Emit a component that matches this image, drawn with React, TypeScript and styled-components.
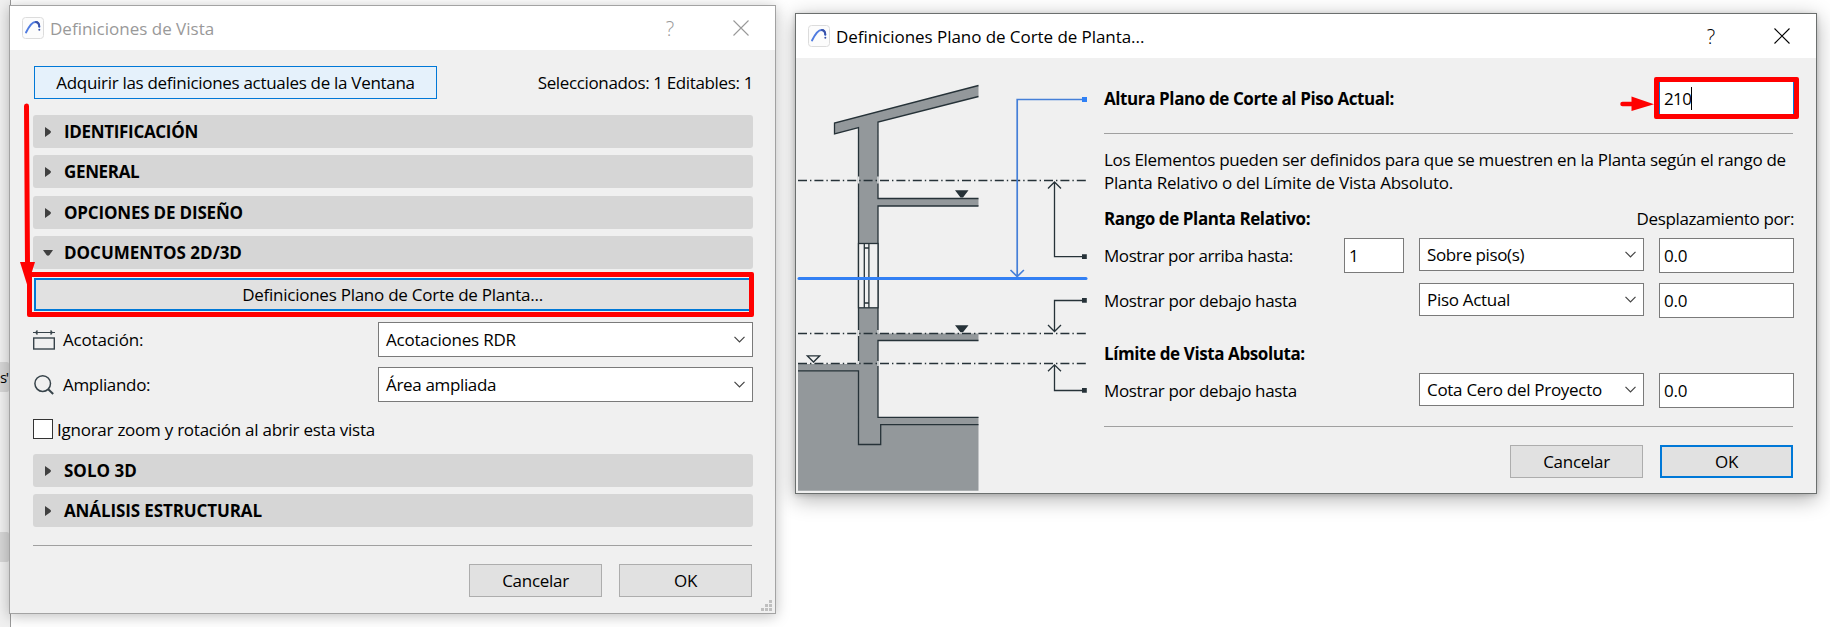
import React from "react";
import styled, { createGlobalStyle, css } from "styled-components";

const GlobalStyle = createGlobalStyle`
  * { box-sizing: border-box; }
  body { margin: 0; background: #fff; overflow: hidden; }
  button, input { font: inherit; color: inherit; margin: 0; }
`;

const Desktop = styled.div`
  position: relative;
  width: 1830px;
  height: 627px;
  overflow: hidden;
  background: #fff;
  font-family: "Open Sans", "Noto Sans", sans-serif;
  font-size: 17px;
  line-height: 23px;
  color: #000;
`;

const Backdrop = styled.div`
  width: 11px;
  height: 627px;
  padding-top: 362px;
  background: #f0f0f0;
  border-right: 1px solid #9a9a9a;
  display: flex;
  flex-direction: column;
  gap: 140px;
`;

const BackdropTab = styled.div`
  width: 9px;
  height: 30px;
  background: #d6d6d6;
  border-radius: 0 2px 2px 0;
  white-space: nowrap;
  line-height: 30px;
  font-size: 15px;
  letter-spacing: -1.5px;
`;

const Dialog = styled.section<{ $x: number; $y: number; $w: number; $h: number; $active?: boolean }>`
  position: absolute;
  left: ${(p) => p.$x}px;
  top: ${(p) => p.$y}px;
  width: ${(p) => p.$w}px;
  height: ${(p) => p.$h}px;
  display: flex;
  flex-direction: column;
  background: #f0f0f0;
  border: 1px solid ${(p) => (p.$active ? "#6b6f6e" : "#a3a3a3")};
  box-shadow: ${(p) =>
    p.$active ? "0 5px 20px rgba(0,0,0,.32), 0 1px 5px rgba(0,0,0,.18)" : "0 2px 13px rgba(0,0,0,.26)"};
`;

const TitleBar = styled.header<{ $active?: boolean }>`
  height: 44px;
  flex: none;
  display: flex;
  align-items: center;
  background: #fff;
  padding: 0 26px 0 12px;
  color: ${(p) => (p.$active ? "#000" : "#999")};

  svg { flex: none; }
`;

const TitleText = styled.h1<{ $track?: number }>`
  flex: 1;
  margin: 1px 0 0 6px;
  font-size: 17px;
  font-weight: 400;
  letter-spacing: ${(p) => p.$track ?? 0}px;
`;

const HelpMark = styled.span`
  width: 20px;
  margin-right: 53px;
  text-align: center;
  font-size: 20px;
  font-weight: 300;
`;

const Label = styled.span<{ $track?: number; $bold?: boolean }>`
  white-space: nowrap;
  letter-spacing: ${(p) => p.$track ?? -0.28}px;
  font-weight: ${(p) => (p.$bold ? 700 : 400)};
`;

const PushButton = styled.button<{ $w?: number; $look?: "hot" | "default" }>`
  width: ${(p) => (p.$w ? `${p.$w}px` : "auto")};
  height: 33px;
  padding: 0;
  display: flex;
  align-items: center;
  justify-content: center;
  border: 1px solid #adadad;
  background: #e1e1e1;
  ${(p) => p.$look === "hot" && css`background: #e5f1fb; border-color: #0078d7;`}
  ${(p) => p.$look === "default" && css`border: 2px solid #0078d7;`}
`;

const ViewBody = styled.div`
  padding: 16px 22px 0 23px;
  display: flex;
  flex-direction: column;
`;

const TopRow = styled.div`
  display: flex;
  align-items: center;
  justify-content: space-between;
  padding-left: 1px;
  margin-bottom: 16px;
`;

const SectionBar = styled.div<{ $gap?: number }>`
  height: 33px;
  margin-bottom: ${(p) => p.$gap ?? 7}px;
  padding-left: 9px;
  display: flex;
  align-items: center;
  background: #d6d6d6;
  border-radius: 3px;

  svg { margin-right: 10px; }
`;

const Highlight = styled.div`
  height: 45px;
  margin: 0 -1px 5px -6px;
  border: 5px solid #f00;
  border-radius: 2px;
  padding: 1px 0 1px 2px;
`;

const HighlightedButton = styled(PushButton)`
  width: 100%;
  border-right-width: 0;
`;

const SettingRow = styled.div`
  height: 35px;
  margin-bottom: 10px;
  display: flex;
  align-items: center;

  > svg { margin-right: 8px; }
`;

const Select = styled.div<{ $w: number; $h?: number }>`
  width: ${(p) => p.$w}px;
  height: ${(p) => p.$h ?? 33}px;
  margin-left: auto;
  padding: 0 7px;
  display: flex;
  align-items: center;
  justify-content: space-between;
  background: #fff;
  border: 1px solid #7a7a7a;
`;

const CheckRow = styled.label`
  height: 23px;
  margin: 6px 0 13px;
  display: flex;
  align-items: center;
  gap: 4px;
`;

const CheckBox = styled.span`
  width: 20px;
  height: 20px;
  margin-top: -1px;
  background: #fff;
  border: 1px solid #333;
`;

const Rule = styled.hr<{ $inset?: number }>`
  align-self: stretch;
  height: 1px;
  margin: 0 ${(p) => p.$inset ?? 0}px 0 0;
  border: 0;
  background: #a0a0a0;
`;

const Actions = styled.footer<{ $inset?: number }>`
  display: flex;
  justify-content: flex-end;
  gap: 17px;
  margin-top: 18px;
  padding-right: ${(p) => p.$inset ?? 0}px;
`;

const Grip = styled.svg`
  position: absolute;
  right: 3px;
  bottom: 2px;
`;

const CutBody = styled.div`
  flex: 1;
  display: grid;
  grid-template-columns: 308px 689px;
`;

const CutForm = styled.div`
  padding-top: 19px;
  display: flex;
  flex-direction: column;
`;

const HeightRow = styled.div`
  height: 42px;
  display: flex;
  align-items: center;
  justify-content: space-between;
  margin: 0 -6px 14px 0;
`;

const HeightTarget = styled.div`
  display: flex;
  align-items: center;

  svg { margin-top: 12px; }
`;

const HeightField = styled.div`
  width: 145px;
  height: 42px;
  padding-left: 5px;
  display: flex;
  align-items: center;
  background: #fff;
  border: 5px solid #f00;
  border-radius: 2px;
  box-shadow: inset 1px 0 #0078d7, inset -1px 0 #0078d7;
`;

const Caret = styled.i`
  width: 1px;
  height: 23px;
  background: #000;
`;

const Paragraph = styled.p`
  margin: 14px 0 13px;
  display: flex;
  flex-direction: column;
`;

const HeadingRow = styled.div`
  height: 23px;
  margin: 0 -1px 8px 0;
  display: flex;
  justify-content: space-between;
`;

const FieldRow = styled.div<{ $after: number }>`
  height: 35px;
  margin: 0 -1px ${(p) => p.$after}px 0;
  display: grid;
  grid-template-columns: 225px 60px 225px 135px;
  column-gap: 15px;
`;

const LevelField = styled.div<{ $col: number }>`
  grid-column: ${(p) => p.$col};
  height: 35px;
  padding-left: 4px;
  display: flex;
  align-items: center;
  background: #fff;
  border: 1px solid #7a7a7a;
`;

const RowLabel = styled(Label)`
  line-height: 35px;
`;

const FieldSelect = styled(Select)`
  grid-column: 3;
`;

const Annotation = styled.svg`
  position: absolute;
  left: 18px;
  top: 100px;
`;

const AppIcon = () => (
  <svg width="22" height="22" viewBox="0 0 22 22" fill="none">
    <rect x=".5" y=".5" width="21" height="21" rx="3" fill="#fcfcfc" stroke="#dcdcdc" />
    <path d="M4 15.500C6.500 10.500 9.500 5 13.300 5c2.600 0 4 2.200 4 5" stroke="#4f7be0" strokeWidth="1.900" strokeLinecap="round" />
    <path d="M13.300 5c2.600 0 4 2.200 4 5" stroke="#3a52a8" strokeWidth="1.900" />
    <circle cx="17.300" cy="12.700" r="1" fill="#3a52a8" />
  </svg>
);

const CloseIcon = () => (
  <svg width="16" height="16" viewBox="0 0 16 16" stroke="currentColor" strokeWidth="1.100">
    <path d="M.5.5l15 15M15.500.5l-15 15" />
  </svg>
);

const Chevron = () => (
  <svg width="11" height="7" viewBox="0 0 11 7" fill="none" stroke="#444" strokeWidth="1.200">
    <path d="M.5.800l5 5 5-5" />
  </svg>
);

const Triangle = ({ open }: { open?: boolean }) => (
  <svg width="12" height="12" viewBox="0 0 12 12" fill="#404040">
    {open ? <path d="M1 3h10L7.500 8q-1.500 1.500-3 0z" /> : <path d="M3 1l5 3.600q2 1.400 0 2.800L3 11z" />}
  </svg>
);

const DimensionIcon = () => (
  <svg width="22" height="20" viewBox="0 0 22 20" fill="none" stroke="#37434a" strokeWidth="1.200">
    <path d="M0 2.500h22M4 .3v4.400M18 .3v4.400" />
    <path d="M1.500 2.500l2.500-1.700v3.400zM20.500 2.500L18 .8v3.400z" fill="#37434a" stroke="none" />
    <rect x=".7" y="8" width="20.600" height="11" strokeWidth="1.400" />
  </svg>
);

const SearchIcon = () => (
  <svg width="22" height="20" viewBox="0 0 22 20" fill="none" stroke="#37434a" strokeWidth="1.500">
    <circle cx="9.700" cy="8.600" r="7.800" />
    <path d="M15.200 14.200l5 4.800" strokeWidth="2" />
  </svg>
);

const ink = "#263238";
const concrete = "#93989b";

const DashLine = ({ y }: { y: number }) => (
  <path d={`M798 ${y}H1087`} stroke={ink} strokeWidth="1.300" strokeDasharray="9 3 1.400 3" />
);

const SectionDrawing = () => (
  <svg width="292" height="435" viewBox="796 58 292 435" fill="none" stroke={ink} strokeWidth="1.300">
    <g stroke="none" fill={concrete}>
      <path d="M834.500 123L978.500 85.500V96.500L878 122V243.500H858.500V127.500L834.500 134z" />
      <path d="M878 198.500h100.500v7.500H878zM858.500 308H878v25.500h100.500v7H878V417.300h100.500V490.700H798V364h60.500z" />
    </g>
    <path d="M978.500 85.500L834.500 123V134L858.500 127.500V308M978.500 96.500L878 122V198.500H978.500M978.500 206H878V333" />
    <rect x="858.500" y="243.500" width="19.500" height="64.300" fill="#f0f0f0" />
    <path d="M864.300 243.500v64.300M868.900 243.500v64.300M864.300 248h4.600M864.300 303h4.600" />
    <path d="M858.500 308V364M978.500 340.500H878V417.300H978.500M978.500 424.600H880.700V444.500H858.500V370.800H798" />
    <path d="M858.500 176.500v7M878 176.500v7M858.500 330v6M878 330v3M858.500 361v3M878 361v5" stroke="#e2e4e5" strokeWidth="1.600" />
    <DashLine y={180.5} />
    <DashLine y={333.5} />
    <DashLine y={363.5} />
    <path d="M955 190.300h13.500l-5.500 7.200h-2.500zM955 325.300h13.500l-5.500 7h-2.500z" fill={ink} stroke="none" />
    <path d="M807.300 355.800h12.400l-6.200 6.200z" fill="#f0f0f0" />
    <path d="M1084 256.700H1054.500V182M1048 188.500l6.500-6.500 6.500 6.500" />
    <path d="M1084 300.500H1054.500V331.500M1048 325l6.500 6.500 6.500-6.500" />
    <path d="M1084 390.500H1054.500V365M1048 371.300l6.500-6.500 6.500 6.500" />
    <path d="M1082 254.300h4.800v4.800h-4.800zM1082 298h4.800v4.800h-4.800zM1082 388h4.800v4.800h-4.800z" fill={ink} stroke="none" />
    <path d="M1084 99.500H1017.200V276M1010.500 270l6.700 6.500 6.700-6.500" stroke="#457fd8" strokeWidth="1.700" />
    <rect x="1082" y="97" width="5" height="5" fill="#2f80f5" stroke="none" />
    <path d="M799 278.600H1086" stroke="#3380f4" strokeWidth="3" strokeLinecap="round" />
  </svg>
);

interface BarProps {
  title: string;
  track: number;
  gap?: number;
  open?: boolean;
}

const Section = ({ title, track, gap, open }: BarProps) => (
  <SectionBar $gap={gap}>
    <Triangle open={open} />
    <Label $bold $track={track}>{title}</Label>
  </SectionBar>
);

const ViewSettingsDialog = () => (
  <Dialog $x={9} $y={5} $w={767} $h={609}>
    <TitleBar>
      <AppIcon />
      <TitleText>Definiciones de Vista</TitleText>
      <HelpMark>?</HelpMark>
      <CloseIcon />
    </TitleBar>
    <ViewBody>
      <TopRow>
        <PushButton $w={403} $look="hot">
          <Label $track={-0.3}>Adquirir las definiciones actuales de la Ventana</Label>
        </PushButton>
        <Label $track={-0.36}>Seleccionados: 1 Editables: 1</Label>
      </TopRow>
      <Section title="IDENTIFICACIÓN" track={-0.32} />
      <Section title="GENERAL" track={-0.35} gap={8} />
      <Section title="OPCIONES DE DISEÑO" track={-0.19} />
      <Section title="DOCUMENTOS 2D/3D" track={0} gap={3} open />
      <Highlight>
        <HighlightedButton $look="default">
          <Label $track={-0.25}>Definiciones Plano de Corte de Planta...</Label>
        </HighlightedButton>
      </Highlight>
      <SettingRow>
        <DimensionIcon />
        <Label $track={-0.2}>Acotación:</Label>
        <Select $w={375} $h={35}>
          <Label $track={-0.22}>Acotaciones RDR</Label>
          <Chevron />
        </Select>
      </SettingRow>
      <SettingRow>
        <SearchIcon />
        <Label $track={-0.32}>Ampliando:</Label>
        <Select $w={375} $h={35}>
          <Label $track={-0.34}>Área ampliada</Label>
          <Chevron />
        </Select>
      </SettingRow>
      <CheckRow>
        <CheckBox />
        <Label $track={-0.25}>Ignorar zoom y rotación al abrir esta vista</Label>
      </CheckRow>
      <Section title="SOLO 3D" track={0} />
      <Section title="ANÁLISIS ESTRUCTURAL" track={-0.11} gap={18} />
      <Rule $inset={1} />
      <Actions $inset={1}>
        <PushButton $w={133}><Label>Cancelar</Label></PushButton>
        <PushButton $w={133}><Label>OK</Label></PushButton>
      </Actions>
    </ViewBody>
    <Grip width="11" height="11" fill="#bfbfbf">
      <path d="M8 0h3v3H8zM4 4h3v3H4zM8 4h3v3H8zM0 8h3v3H0zM4 8h3v3H4zM8 8h3v3H8z" />
    </Grip>
  </Dialog>
);

const CutPlaneDialog = () => (
  <Dialog $x={795} $y={13} $w={1022} $h={481} $active>
    <TitleBar $active>
      <AppIcon />
      <TitleText $track={-0.06}>Definiciones Plano de Corte de Planta...</TitleText>
      <HelpMark>?</HelpMark>
      <CloseIcon />
    </TitleBar>
    <CutBody>
      <SectionDrawing />
      <CutForm>
        <HeightRow>
          <Label $bold $track={-0.4}>Altura Plano de Corte al Piso Actual:</Label>
          <HeightTarget>
            <svg width="34" height="16" viewBox="0 0 34 16">
              <path d="M2.500 8H14" stroke="#f00" strokeWidth="4.500" strokeLinecap="round" />
              <path d="M11.500.5L34 8.300 11.500 15z" fill="#f00" />
            </svg>
            <HeightField>
              <Label $track={-0.6}>210</Label>
              <Caret />
            </HeightField>
          </HeightTarget>
        </HeightRow>
        <Rule />
        <Paragraph>
          <Label $track={-0.305}>Los Elementos pueden ser definidos para que se muestren en la Planta según el rango de</Label>
          <Label $track={-0.23}>Planta Relativo o del Límite de Vista Absoluto.</Label>
        </Paragraph>
        <HeadingRow>
          <Label $bold $track={-0.4}>Rango de Planta Relativo:</Label>
          <Label $track={-0.36}>Desplazamiento por:</Label>
        </HeadingRow>
        <FieldRow $after={10}>
          <RowLabel $track={-0.42}>Mostrar por arriba hasta:</RowLabel>
          <LevelField $col={2}><Label>1</Label></LevelField>
          <FieldSelect $w={225}><Label $track={-0.38}>Sobre piso(s)</Label><Chevron /></FieldSelect>
          <LevelField $col={4}><Label>0.0</Label></LevelField>
        </FieldRow>
        <FieldRow $after={24}>
          <RowLabel $track={-0.37}>Mostrar por debajo hasta</RowLabel>
          <FieldSelect $w={225}><Label $track={-0.3}>Piso Actual</Label><Chevron /></FieldSelect>
          <LevelField $col={4}><Label>0.0</Label></LevelField>
        </FieldRow>
        <HeadingRow>
          <Label $bold $track={-0.4}>Límite de Vista Absoluta:</Label>
        </HeadingRow>
        <FieldRow $after={18}>
          <RowLabel $track={-0.37}>Mostrar por debajo hasta</RowLabel>
          <FieldSelect $w={225}><Label $track={-0.29}>Cota Cero del Proyecto</Label><Chevron /></FieldSelect>
          <LevelField $col={4}><Label>0.0</Label></LevelField>
        </FieldRow>
        <Rule />
        <Actions>
          <PushButton $w={133}><Label>Cancelar</Label></PushButton>
          <PushButton $w={133} $look="default"><Label>OK</Label></PushButton>
        </Actions>
      </CutForm>
    </CutBody>
  </Dialog>
);

export default function App() {
  return (
    <Desktop>
      <GlobalStyle />
      <Backdrop>
        <BackdropTab>s'</BackdropTab>
        <BackdropTab />
      </Backdrop>
      <ViewSettingsDialog />
      <CutPlaneDialog />
      <Annotation width="20" height="190" viewBox="18 100 20 190">
        <path d="M26.500 106L27.500 265" stroke="#f00" strokeWidth="5" strokeLinecap="round" />
        <path d="M20 262H35L27.500 286z" fill="#f00" />
      </Annotation>
    </Desktop>
  );
}
